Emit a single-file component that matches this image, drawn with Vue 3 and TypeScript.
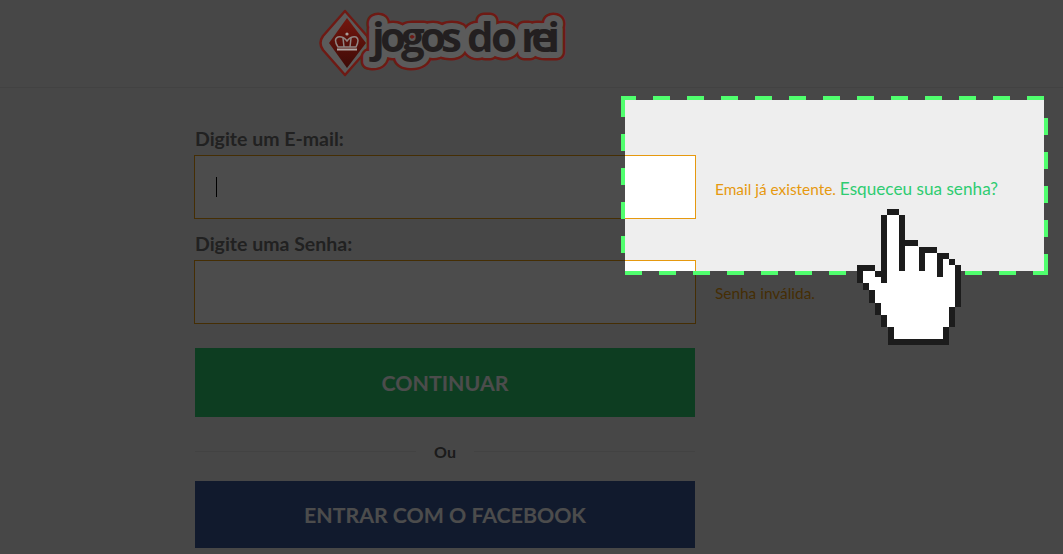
<script setup lang="ts">
// hand cursor outline, coordinates in a 390x465 grid (viewBox), one art pixel = 18 units
const handOutline: [number, number, number, number][] = [
  [142, 27, 36, 18],
  [124, 45, 18, 205],
  [178, 45, 18, 169],
  [196, 120, 38, 18],
  [236, 140, 18, 74],
  [254, 140, 36, 18],
  [292, 158, 18, 74],
  [310, 158, 18, 18],
  [328, 176, 18, 18],
  [346, 194, 18, 128],
  [328, 322, 18, 58],
  [310, 380, 18, 55],
  [144, 418, 166, 17],
  [144, 380, 18, 38],
  [124, 344, 18, 36],
  [106, 308, 18, 36],
  [88, 270, 18, 38],
  [70, 250, 18, 20],
  [52, 196, 18, 54],
  [70, 196, 36, 18],
  [106, 214, 18, 18],
]

// logo words, each squeezed to its own width
const logoWords = [
  { text: 'jogos', x: 372, w: 90 },
  { text: 'do', x: 467, w: 50 },
  { text: 'rei', x: 521, w: 39 },
]
const logoLayers = [
  { stroke: '#6e1a14', width: 17, fill: '#6e1a14' },
  { stroke: '#5b5b5b', width: 12, fill: '#5b5b5b' },
  { stroke: 'none', width: 0, fill: '#231f20' },
]
</script>

<template>
  <div class="page">
    <header class="top">
      <svg class="logo" width="256" height="80" viewBox="0 0 256 80">
        <defs>
          <linearGradient id="gem" x1="0" y1="0" x2="0" y2="1">
            <stop offset="0" stop-color="#74160e" />
            <stop offset="1" stop-color="#3e0b07" />
          </linearGradient>
        </defs>
        <g transform="translate(-316 0)">
          <path d="M345 11 L367 36 Q372 43 367 50 L345 75 L323 50 Q318 43 323 36 Z" fill="#5b5b5b" stroke="#6e1a14" stroke-width="2.5" stroke-linejoin="round" />
          <path d="M347 18 L366 43 L347 68 L329 43 Z" fill="url(#gem)" />
          <g fill="none" stroke="#8f8582" stroke-width="1.5">
            <path d="M338 47 Q333 39 338 37 Q343 36 347 41 Q351 36 356 37 Q360 39 356 47 Z" />
            <path d="M343 38 L344 47 M351 38 L350 47" />
            <path d="M337 49.5 H357" stroke-width="2" stroke="#b0a8a5" />
          </g>
          <circle cx="347" cy="34" r="1.6" fill="#a89e9b" />
          <g v-for="(layer, i) in logoLayers" :key="i" class="logo-word">
            <text
              v-for="word in logoWords"
              :key="word.text"
              :x="word.x"
              y="52"
              :textLength="word.w"
              lengthAdjust="spacing"
              :fill="layer.fill"
              :stroke="layer.stroke"
              :stroke-width="layer.width"
              stroke-linejoin="round"
            >{{ word.text }}</text>
          </g>
        </g>
      </svg>
    </header>

    <main class="form">
      <label class="label" for="email">Digite um E-mail:</label>
      <div class="row">
        <div class="field">
          <input id="email" class="input" type="text" />
          <span class="caret"></span>
        </div>
        <p class="msg">Email já existente. <a class="link">Esqueceu sua senha?</a></p>
      </div>

      <label class="label second" for="senha">Digite uma Senha:</label>
      <div class="row">
        <div class="field">
          <input id="senha" class="input" type="password" />
        </div>
        <p class="msg">Senha inválida.</p>
      </div>

      <button class="btn green">CONTINUAR</button>
      <div class="or"><span>Ou</span></div>
      <button class="btn fb">ENTRAR COM O FACEBOOK</button>
    </main>

    <!-- recorte iluminado -->
    <div class="spot"></div>
    <svg class="dashes" width="1063" height="554">
      <line x1="621" y1="98" x2="1044" y2="98" stroke-dashoffset="2" />
      <line x1="623" y1="100" x2="623" y2="270" />
      <line x1="625" y1="273" x2="1048" y2="273" />
      <line x1="1046" y1="118" x2="1046" y2="271" />
    </svg>

    <svg class="hand" width="130" height="155" viewBox="0 0 390 465" shape-rendering="crispEdges">
      <polygon fill="#fff" points="142,45 178,45 178,120 232,120 232,140 290,140 290,158 328,158 328,176 346,176 346,194 364,194 364,322 346,322 346,380 328,380 328,435 144,435 144,380 124,380 124,344 106,344 106,308 88,308 88,270 70,270 70,250 52,250 52,196 106,196 106,214 124,214 124,45" />
      <rect v-for="(r, i) in handOutline" :key="i" :x="r[0]" :y="r[1]" :width="r[2]" :height="r[3]" fill="#1c1c1c" />
    </svg>
  </div>
</template>

<style>
body {
  margin: 0;
}
</style>

<style scoped>
.page {
  position: relative;
  width: 1063px;
  height: 554px;
  overflow: hidden;
  background: #eee;
  font-family: Lato, "Open Sans", sans-serif;
}

.top {
  height: 87px;
  border-bottom: 1px solid #ddd;
  padding-left: 316px;
}

.logo {
  display: block;
  position: relative;
  z-index: 3;
}

.logo-word text {
  font-family: "Open Sans", sans-serif;
  font-weight: 700;
  font-size: 42px;
}

.form {
  padding: 38px 0 0 195px;
}

.label {
  display: block;
  font-size: 19.5px;
  line-height: 26px;
  font-weight: 700;
  color: #707070;
  margin-bottom: 3px;
}

.label.second {
  margin-top: 12px;
}

.row {
  display: flex;
  align-items: center;
  gap: 20px;
}

.field {
  position: relative;
  width: 500px;
}

.input {
  display: block;
  box-sizing: border-box;
  width: 502px;
  height: 64px;
  margin-left: -1px;
  border: 1px solid #e6990f;
  border-radius: 0;
  background: #fff;
  outline: none;
}

.caret {
  position: absolute;
  left: 21px;
  top: 22px;
  width: 1px;
  height: 20px;
  background: #000;
}

.msg {
  margin: 2px 0 0;
  white-space: nowrap;
  font-size: 15.4px;
  color: #e6990f;
}

.link {
  font-size: 17.2px;
  color: #2ecc71;
}

.btn {
  display: block;
  width: 500px;
  border: none;
  padding: 0;
  font-family: inherit;
  font-weight: 700;
  font-size: 21.3px;
  color: #fff;
}

.green {
  height: 69px;
  margin-top: 24px;
  background: #2ecc71;
}

.fb {
  height: 67px;
  background: #3b5998;
}

.or {
  box-sizing: border-box;
  width: 500px;
  height: 64px;
  padding-top: 5px;
  display: flex;
  align-items: center;
  gap: 18px;
  font-weight: 700;
  font-size: 16px;
  color: #5a5a5a;
}

.or::before,
.or::after {
  content: "";
  flex: 1;
  height: 1px;
  background: #ddd;
}

.spot {
  position: absolute;
  left: 625px;
  top: 100px;
  width: 419px;
  height: 171px;
  box-shadow: 0 0 0 1400px rgba(0, 0, 0, 0.7);
  z-index: 2;
}

.dashes {
  position: absolute;
  left: 0;
  top: 0;
  z-index: 4;
  stroke: #50ff6e;
  stroke-width: 4;
  stroke-dasharray: 17 17;
}

.hand {
  position: absolute;
  left: 840px;
  top: 200px;
  z-index: 5;
}
</style>
